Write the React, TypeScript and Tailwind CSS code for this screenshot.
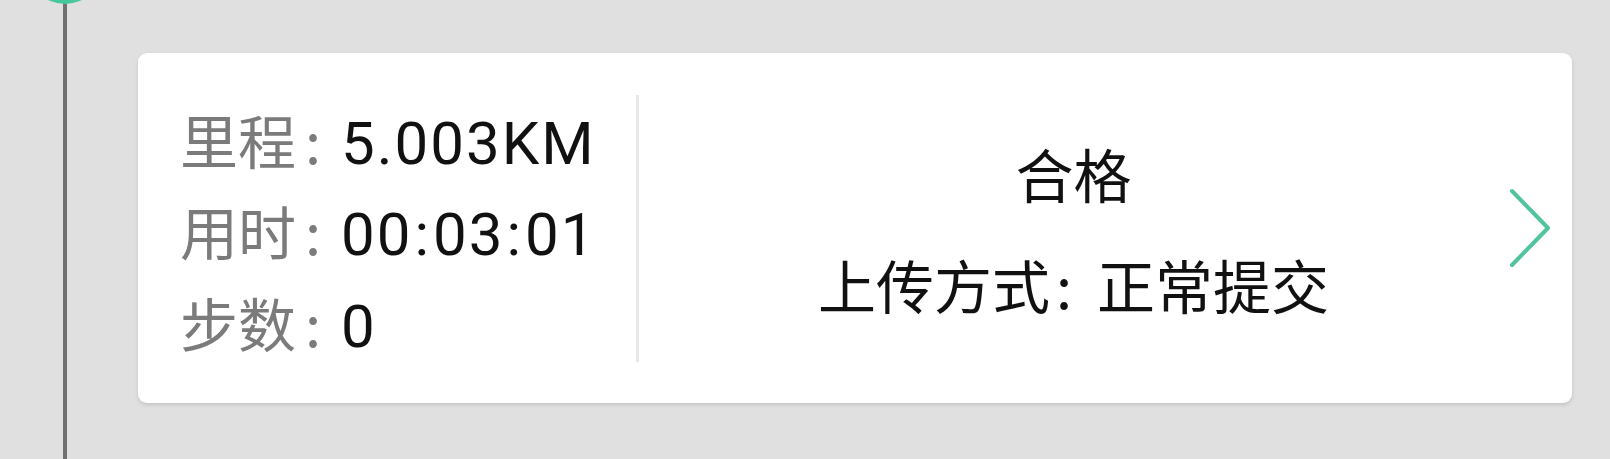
import React from 'react'

const STATS = [
  { label: '里程', value: '5.003KM' },
  { label: '用时', value: '00:03:01' },
  { label: '步数', value: '0' },
]

// colons in the time value sit a little wider apart than Roboto's default
function Value({ text }: { text: string }) {
  const parts = text.split(':')
  return (
    <>
      {parts.map((p, i) => (
        <React.Fragment key={i}>
          {i > 0 && <span className="px-[2px]">:</span>}
          {p}
        </React.Fragment>
      ))}
    </>
  )
}

function Chevron() {
  return (
    <svg viewBox="0 0 42 80" className="w-[42px] h-[80px] shrink-0" fill="none">
      <path d="M4 3 L40 40 L4 77" stroke="#50c59d" strokeWidth="4" strokeLinecap="round" strokeLinejoin="round" />
    </svg>
  )
}

export default function App() {
  return (
    <div className="w-full h-[459px] bg-[#e0e0e0] flex overflow-hidden">
      {/* Timeline rail */}
      <div className="relative w-[130px] shrink-0 flex justify-center">
        <div className="w-[4px] h-full bg-[#707070]" />
        <div className="absolute left-[27px] top-[-72px] w-[76px] h-[76px] rounded-full bg-[#46c89c]" />
      </div>

      {/* Record card */}
      <div className="pt-[53px] pl-[8px]">
        <div className="w-[1434px] h-[350px] bg-white rounded-[9px] shadow-[0_2px_4px_rgba(0,0,0,0.12)] flex items-center pr-[22px]">
          <div className="w-[498px] pl-[42px] pt-[6px] flex flex-col">
            {STATS.map((s) => (
              <div key={s.label} className="flex items-baseline h-[91.5px] leading-[91.5px] whitespace-nowrap">
                <span className="text-[58px] text-[#7b7b7b] font-['Noto_Sans_CJK_SC',sans-serif]">{s.label}</span>
                <span className="inline-block w-[45px] pl-[9px] text-[58px] text-[#7b7b7b] font-['Noto_Sans_CJK_SC',sans-serif]">:</span>
                <span className="text-[60px] tracking-[2px] text-[#111] font-['Roboto',sans-serif]">
                  <Value text={s.value} />
                </span>
              </div>
            ))}
          </div>

          <div className="w-[3px] h-[267px] bg-[#e8e8e8] shrink-0" />

          <div className="flex-1 flex flex-col items-center justify-center gap-[53px] text-[58px] leading-[58px] text-[#111] font-['Noto_Sans_CJK_SC',sans-serif] whitespace-nowrap">
            <div>合格</div>
            <div>
              上传方式<span className="inline-block w-[47px] pl-[6px]">:</span>正常提交
            </div>
          </div>

          <Chevron />
        </div>
      </div>
    </div>
  )
}
